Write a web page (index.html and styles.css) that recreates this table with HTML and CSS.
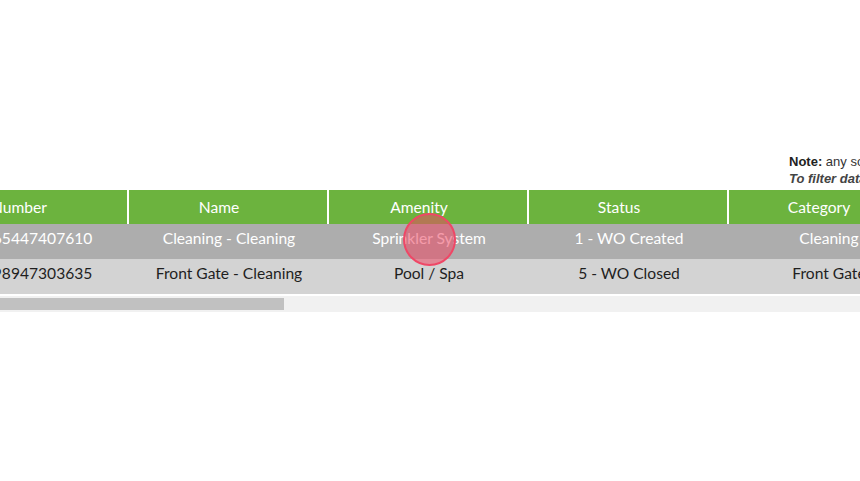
FILE: index.html
```html
<!DOCTYPE html>
<html>
<head>
<meta charset="utf-8">
<link rel="stylesheet" href="styles.css">
</head>
<body>
<div class="page">
  <div class="note">
    <div><b>Note:</b> any sorting or filtering applied is kept</div>
    <div class="filter">To filter data, type in the boxes below</div>
  </div>
  <div class="grid-wrap">
    <table class="grid">
      <colgroup>
        <col class="c"><col class="c"><col class="c"><col class="c"><col class="c">
      </colgroup>
      <thead>
        <tr>
          <th>Number</th>
          <th>Name</th>
          <th>Amenity</th>
          <th>Status</th>
          <th>Category</th>
        </tr>
      </thead>
      <tbody>
        <tr class="sel">
          <td>20065447407610</td>
          <td>Cleaning - Cleaning</td>
          <td>Sprinkler System</td>
          <td>1 - WO Created</td>
          <td>Cleaning</td>
        </tr>
        <tr class="alt">
          <td>20098947303635</td>
          <td>Front Gate - Cleaning</td>
          <td>Pool / Spa</td>
          <td>5 - WO Closed</td>
          <td>Front Gate</td>
        </tr>
      </tbody>
    </table>
  </div>
  <div class="hscroll"><div class="thumb"></div></div>
  <div class="click-dot"></div>
</div>
</body>
</html>
```
FILE: styles.css
```css
html, body {
  margin: 0;
  padding: 0;
  background: #ffffff;
  overflow: hidden;
}
.page {
  position: relative;
  width: 860px;
  height: 481px;
  overflow: hidden;
}
.note {
  margin-top: 153px;
  padding-left: 789px;
  font-family: "Liberation Sans", Arial, sans-serif;
  font-size: 13px;
  line-height: 17px;
  height: 36px;
  color: #333333;
  white-space: nowrap;
}
.note b { color: #222; }
.note .filter {
  font-weight: bold;
  font-style: italic;
  color: #444;
}
.grid-wrap {
  margin-top: 1px;
  overflow: hidden;
  width: 860px;
}
.grid {
  margin-left: -71px;
  width: 1000px;
  border-collapse: separate;
  border-spacing: 0;
  font-family: Lato, "Open Sans", sans-serif;
  font-size: 15.6px;
  table-layout: fixed;
}
.grid col.c { width: 200px; }
.grid th, .grid td {
  box-sizing: border-box;
  text-align: center;
  white-space: nowrap;
  overflow: hidden;
}
.grid th {
  height: 34px;
  padding: 0 18px 0 0;
  background: #6cb33e;
  color: #ffffff;
  font-weight: normal;
  border-right: 2px solid #ffffff;
}
.grid td {
  height: 35px;
  padding: 0 0 7px 0;
}
.grid tr.sel td {
  background: #adadad;
  color: #ffffff;
}
.grid tr.alt td {
  background: #d3d3d3;
  color: #1f1f1f;
}
.hscroll {
  margin-top: 2px;
  height: 16px;
  background: #f1f1f1;
  width: 860px;
  display: flex;
  align-items: center;
}
.thumb {
  width: 284px;
  height: 12px;
  background: #c1c1c1;
}
.click-dot {
  position: absolute;
  left: 403px;
  top: 213px;
  width: 49px;
  height: 49px;
  border-radius: 50%;
  border: 2px solid #ef4766;
  background: rgba(236, 72, 100, 0.55);
}
```
